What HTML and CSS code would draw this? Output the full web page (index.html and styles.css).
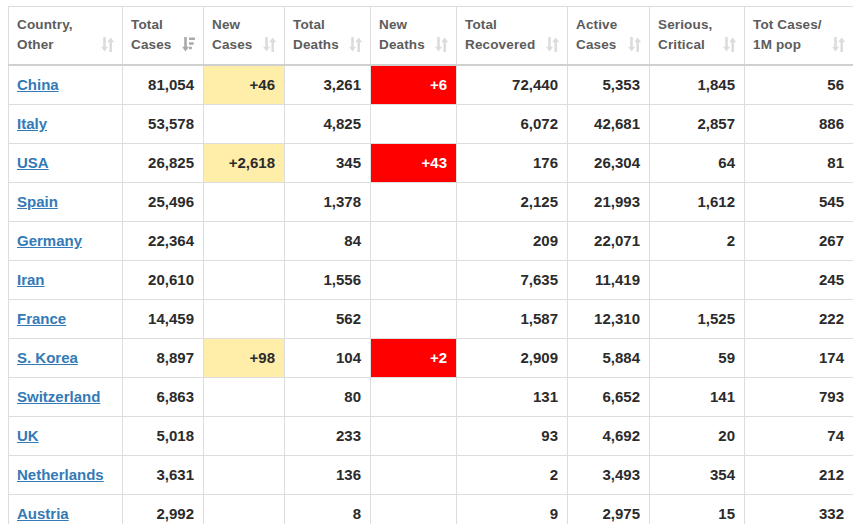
FILE: index.html
```html
<!DOCTYPE html>
<html lang="en">
<head>
<meta charset="utf-8">
<title>Coronavirus Cases</title>
<link rel="stylesheet" href="styles.css">
</head>
<body>
<table class="countries">
  <colgroup>
    <col class="c-country"><col class="c-total"><col class="c-new"><col class="c-deaths"><col class="c-newdeaths"><col class="c-recovered"><col class="c-active"><col class="c-serious"><col class="c-permil">
  </colgroup>
  <thead>
    <tr>
      <th><div class="th-inner"><span>Country,<br>Other</span><svg class="sort" viewBox="0 0 12 14" width="13" height="15"><path d="M2 0h2.4v9H6.5L3.2 13.5 0 9h2z M9 0.5 12.3 5h-2.1v9H7.8V5H5.7z"/></svg></div></th>
      <th><div class="th-inner"><span>Total<br>Cases</span><svg class="sort active" viewBox="0 0 12 14" width="13" height="15"><path d="M2 0h2.4v9H6.5L3.2 13.5 0 9h2z M6.5 0.5h5.5v2.4H6.5z M6.5 4.8h4.3v2.4H6.5z M6.5 9.1h2.6v2.4H6.5z"/></svg></div></th>
      <th><div class="th-inner"><span>New<br>Cases</span><svg class="sort" viewBox="0 0 12 14" width="13" height="15"><path d="M2 0h2.4v9H6.5L3.2 13.5 0 9h2z M9 0.5 12.3 5h-2.1v9H7.8V5H5.7z"/></svg></div></th>
      <th><div class="th-inner"><span>Total<br>Deaths</span><svg class="sort" viewBox="0 0 12 14" width="13" height="15"><path d="M2 0h2.4v9H6.5L3.2 13.5 0 9h2z M9 0.5 12.3 5h-2.1v9H7.8V5H5.7z"/></svg></div></th>
      <th><div class="th-inner"><span>New<br>Deaths</span><svg class="sort" viewBox="0 0 12 14" width="13" height="15"><path d="M2 0h2.4v9H6.5L3.2 13.5 0 9h2z M9 0.5 12.3 5h-2.1v9H7.8V5H5.7z"/></svg></div></th>
      <th><div class="th-inner"><span>Total<br>Recovered</span><svg class="sort" viewBox="0 0 12 14" width="13" height="15"><path d="M2 0h2.4v9H6.5L3.2 13.5 0 9h2z M9 0.5 12.3 5h-2.1v9H7.8V5H5.7z"/></svg></div></th>
      <th><div class="th-inner"><span>Active<br>Cases</span><svg class="sort" viewBox="0 0 12 14" width="13" height="15"><path d="M2 0h2.4v9H6.5L3.2 13.5 0 9h2z M9 0.5 12.3 5h-2.1v9H7.8V5H5.7z"/></svg></div></th>
      <th><div class="th-inner"><span>Serious,<br>Critical</span><svg class="sort" viewBox="0 0 12 14" width="13" height="15"><path d="M2 0h2.4v9H6.5L3.2 13.5 0 9h2z M9 0.5 12.3 5h-2.1v9H7.8V5H5.7z"/></svg></div></th>
      <th><div class="th-inner"><span>Tot&nbsp;Cases/<br>1M pop</span><svg class="sort" viewBox="0 0 12 14" width="13" height="15"><path d="M2 0h2.4v9H6.5L3.2 13.5 0 9h2z M9 0.5 12.3 5h-2.1v9H7.8V5H5.7z"/></svg></div></th>
    </tr>
  </thead>
  <tbody>
    <tr><td><a href="#">China</a></td><td>81,054</td><td class="new-cases">+46</td><td>3,261</td><td class="new-deaths">+6</td><td>72,440</td><td>5,353</td><td>1,845</td><td>56</td></tr>
    <tr><td><a href="#">Italy</a></td><td>53,578</td><td></td><td>4,825</td><td></td><td>6,072</td><td>42,681</td><td>2,857</td><td>886</td></tr>
    <tr><td><a href="#">USA</a></td><td>26,825</td><td class="new-cases">+2,618</td><td>345</td><td class="new-deaths">+43</td><td>176</td><td>26,304</td><td>64</td><td>81</td></tr>
    <tr><td><a href="#">Spain</a></td><td>25,496</td><td></td><td>1,378</td><td></td><td>2,125</td><td>21,993</td><td>1,612</td><td>545</td></tr>
    <tr><td><a href="#">Germany</a></td><td>22,364</td><td></td><td>84</td><td></td><td>209</td><td>22,071</td><td>2</td><td>267</td></tr>
    <tr><td><a href="#">Iran</a></td><td>20,610</td><td></td><td>1,556</td><td></td><td>7,635</td><td>11,419</td><td></td><td>245</td></tr>
    <tr><td><a href="#">France</a></td><td>14,459</td><td></td><td>562</td><td></td><td>1,587</td><td>12,310</td><td>1,525</td><td>222</td></tr>
    <tr><td><a href="#">S. Korea</a></td><td>8,897</td><td class="new-cases">+98</td><td>104</td><td class="new-deaths">+2</td><td>2,909</td><td>5,884</td><td>59</td><td>174</td></tr>
    <tr><td><a href="#">Switzerland</a></td><td>6,863</td><td></td><td>80</td><td></td><td>131</td><td>6,652</td><td>141</td><td>793</td></tr>
    <tr><td><a href="#">UK</a></td><td>5,018</td><td></td><td>233</td><td></td><td>93</td><td>4,692</td><td>20</td><td>74</td></tr>
    <tr><td><a href="#">Netherlands</a></td><td>3,631</td><td></td><td>136</td><td></td><td>2</td><td>3,493</td><td>354</td><td>212</td></tr>
    <tr><td><a href="#">Austria</a></td><td>2,992</td><td></td><td>8</td><td></td><td>9</td><td>2,975</td><td>15</td><td>332</td></tr>
  </tbody>
</table>
</body>
</html>
```
FILE: styles.css
```css
html, body {
  background: #fff;
}
body {
  margin: 6px 3px 8px 8px;
  font-family: "Liberation Sans", Arial, sans-serif;
  color: #333;
}
.countries {
  width: 845px;
  table-layout: fixed;
  border-collapse: collapse;
  border: 1px solid #ddd;
}
.c-country { width: 114px; }
.c-total { width: 81px; }
.c-new { width: 81px; }
.c-deaths { width: 86px; }
.c-newdeaths { width: 86px; }
.c-recovered { width: 111px; }
.c-active { width: 82px; }
.c-serious { width: 95px; }
.c-permil { width: 109px; }

.countries th {
  border: 1px solid #ddd;
  border-bottom: 2px solid #d0d0d0;
  padding: 8px 8px 9px 8px;
  text-align: left;
  font-size: 13.5px;
  letter-spacing: 0.15px;
  line-height: 20px;
  font-weight: bold;
  color: #5c5c5c;
  vertical-align: bottom;
}
.th-inner {
  display: flex;
  justify-content: space-between;
  align-items: flex-end;
}
.sort {
  flex: none;
  margin-bottom: 3px;
  fill: #dcdcdc;
}
.sort.active {
  fill: #a9a9a9;
}
.countries td {
  border: 1px solid #ddd;
  padding: 8px 9px 8px 8px;
  font-size: 15px;
  line-height: 22px;
  font-weight: bold;
  text-align: right;
  color: #2b2b2b;
  white-space: nowrap;
}
.countries td:first-child {
  text-align: left;
}
.countries a {
  color: #337ab7;
  text-decoration: underline;
}
.countries td.new-cases {
  background: #ffeeaa;
}
.countries td.new-deaths {
  background: #ff0000;
  color: #fff;
}
```
